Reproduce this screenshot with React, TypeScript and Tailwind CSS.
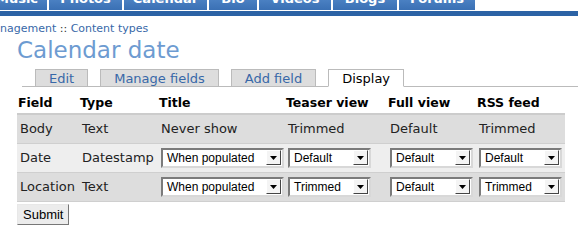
import * as React from "react";

const navTabs = [
  { label: "Music", w: "w-[60px] -ml-[13px]" },
  { label: "Photos", w: "w-[73px]" },
  { label: "Calendar", w: "w-[83px]" },
  { label: "Bio", w: "w-[48px]" },
  { label: "Videos", w: "w-[72px]" },
  { label: "Blogs", w: "w-[64px]" },
  { label: "Forums", w: "w-[76px]" },
];

const subTabs = ["Edit", "Manage fields", "Add field", "Display"];

type Cell = { text: string; select?: boolean; w?: string };

const rows: { bg: string; cells: Cell[] }[] = [
  {
    bg: "bg-[#dddddd]",
    cells: [
      { text: "Body" },
      { text: "Text" },
      { text: "Never show" },
      { text: "Trimmed" },
      { text: "Default" },
      { text: "Trimmed" },
    ],
  },
  {
    bg: "bg-[#eeeeee]",
    cells: [
      { text: "Date" },
      { text: "Datestamp" },
      { text: "When populated", select: true, w: "w-[123px]" },
      { text: "Default", select: true, w: "w-[83px]" },
      { text: "Default", select: true, w: "w-[83px]" },
      { text: "Default", select: true, w: "w-[83px]" },
    ],
  },
  {
    bg: "bg-[#dddddd]",
    cells: [
      { text: "Location" },
      { text: "Text" },
      { text: "When populated", select: true, w: "w-[123px]" },
      { text: "Trimmed", select: true, w: "w-[83px]" },
      { text: "Default", select: true, w: "w-[83px]" },
      { text: "Trimmed", select: true, w: "w-[83px]" },
    ],
  },
];

function FakeSelect({ value, w }: { value: string; w?: string }) {
  return (
    <div
      className={`${w} h-[20px] flex items-center bg-white border-2 border-t-[#7b7b7b] border-l-[#7b7b7b] border-b-[#d8d8d8] border-r-[#d8d8d8] font-['Liberation_Sans',Arial,sans-serif] text-[12px] text-black`}
    >
      <span className="flex-1 pl-[4px] leading-[16px] truncate">{value}</span>
      <span className="mr-[1px] w-[15px] h-[15px] flex items-center justify-center bg-[#f4f4f4] border border-t-white border-l-white border-b-[#444] border-r-[#444]">
        <svg width="7" height="4" viewBox="0 0 7 4">
          <path d="M0 0h7L3.5 4z" fill="#000" />
        </svg>
      </span>
    </div>
  );
}

export default function App() {
  return (
    <div className="w-[578px] h-[247px] overflow-hidden bg-white font-['DejaVu_Sans',Verdana,sans-serif] text-[#222]">
      <div className="flex gap-[2px] h-[10px] overflow-hidden">
        {navTabs.map((t) => (
          <div
            key={t.label}
            className={`${t.w} shrink-0 h-[10px] bg-gradient-to-b from-[#4a80c2] to-[#3a70b4] text-white font-bold text-[13px] leading-[16px] text-center`}
          >
            <div className="-mt-[9px]">{t.label}</div>
          </div>
        ))}
      </div>
      <div className="h-[1px] bg-white" />
      <div className="h-[5px] bg-[#2c63a5]" />

      <div className="mt-[6px] text-[11px] leading-[14px] text-[#333]">
        <a className="text-[#3868a8]">nagement</a> ::{" "}
        <a className="text-[#3868a8]">Content types</a>
      </div>

      <h1 className="mt-[0px] ml-[17px] text-[23px] leading-[28px] font-normal text-[#6d9bd1]">
        Calendar date
      </h1>

      <ul className="mt-[5px] ml-[22px] flex gap-[12px] pl-[13px] border-b border-[#bbbbbb]">
        {subTabs.map((t) => {
          const active = t === "Display";
          return (
            <li
              key={t}
              className={`-mb-px border border-[#bbbbbb] px-[13px] pt-[1px] text-[13px] leading-[15px] ${
                active
                  ? "bg-white border-b-white text-black"
                  : "bg-[#dddddd] text-[#3868a8]"
              }`}
            >
              {t}
            </li>
          );
        })}
      </ul>

      <table className="ml-[17px] w-[548px] table-fixed border-collapse text-[13px]">
        <colgroup>
          <col className="w-[62px]" />
          <col className="w-[79px]" />
          <col className="w-[127px]" />
          <col className="w-[102px]" />
          <col className="w-[89px]" />
          <col className="w-[89px]" />
        </colgroup>
        <thead>
          <tr className="border-b-2 border-[#cccccc]">
            {["Field", "Type", "Title", "Teaser view", "Full view", "RSS feed"].map((h) => (
              <th
                key={h}
                className="text-left font-bold text-black text-[12.5px] pl-[1px] pt-[8px] pb-[2px] leading-[16px] whitespace-nowrap"
              >
                {h}
              </th>
            ))}
          </tr>
        </thead>
        <tbody>
          {rows.map((r, i) => (
            <tr key={i} className={`${r.bg} border-b border-[#cfcfcf]`}>
              {r.cells.map((c, j) => (
                <td key={j} className="h-[29px] pl-[3px] p-0 align-middle whitespace-nowrap text-[#222]">
                  {c.select ? <FakeSelect value={c.text} w={c.w} /> : c.text}
                </td>
              ))}
            </tr>
          ))}
        </tbody>
      </table>

      <button className="mt-[2px] ml-[17px] h-[21px] px-[5px] bg-[#ececec] border border-t-[#e8e8e8] border-l-[#e8e8e8] border-b-[#777] border-r-[#777] font-['Liberation_Sans',Arial,sans-serif] text-[13px] leading-[15px] text-black">
        Submit
      </button>
    </div>
  );
}
